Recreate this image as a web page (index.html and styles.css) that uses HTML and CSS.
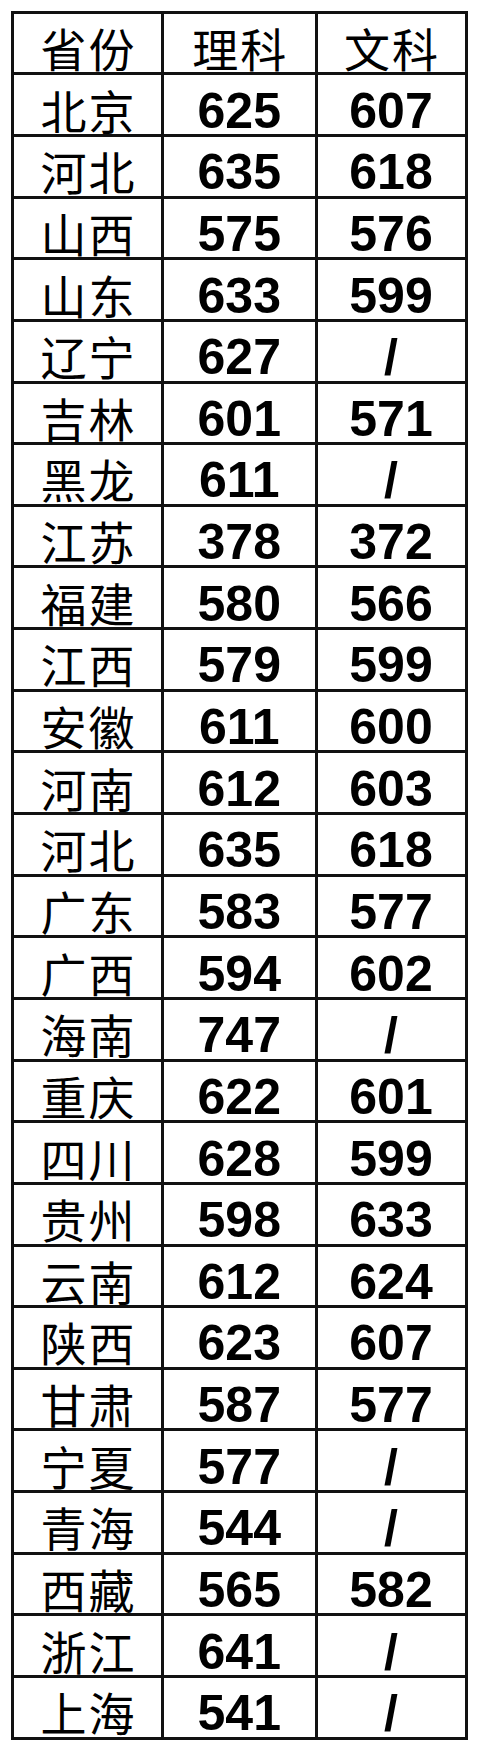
FILE: index.html
```html
<!DOCTYPE html>
<html lang="zh-CN">
<head>
<meta charset="utf-8">
<title>分数线</title>
<link rel="stylesheet" href="styles.css">
</head>
<body>
<div class="grid">
  <div class="cell zh">省份</div><div class="cell zh">理科</div><div class="cell zh">文科</div>
  <div class="cell zh">北京</div><div class="cell num">625</div><div class="cell num">607</div>
  <div class="cell zh">河北</div><div class="cell num">635</div><div class="cell num">618</div>
  <div class="cell zh">山西</div><div class="cell num">575</div><div class="cell num">576</div>
  <div class="cell zh">山东</div><div class="cell num">633</div><div class="cell num">599</div>
  <div class="cell zh">辽宁</div><div class="cell num">627</div><div class="cell num">/</div>
  <div class="cell zh">吉林</div><div class="cell num">601</div><div class="cell num">571</div>
  <div class="cell zh">黑龙</div><div class="cell num">611</div><div class="cell num">/</div>
  <div class="cell zh">江苏</div><div class="cell num">378</div><div class="cell num">372</div>
  <div class="cell zh">福建</div><div class="cell num">580</div><div class="cell num">566</div>
  <div class="cell zh">江西</div><div class="cell num">579</div><div class="cell num">599</div>
  <div class="cell zh">安徽</div><div class="cell num">611</div><div class="cell num">600</div>
  <div class="cell zh">河南</div><div class="cell num">612</div><div class="cell num">603</div>
  <div class="cell zh">河北</div><div class="cell num">635</div><div class="cell num">618</div>
  <div class="cell zh">广东</div><div class="cell num">583</div><div class="cell num">577</div>
  <div class="cell zh">广西</div><div class="cell num">594</div><div class="cell num">602</div>
  <div class="cell zh">海南</div><div class="cell num">747</div><div class="cell num">/</div>
  <div class="cell zh">重庆</div><div class="cell num">622</div><div class="cell num">601</div>
  <div class="cell zh">四川</div><div class="cell num">628</div><div class="cell num">599</div>
  <div class="cell zh">贵州</div><div class="cell num">598</div><div class="cell num">633</div>
  <div class="cell zh">云南</div><div class="cell num">612</div><div class="cell num">624</div>
  <div class="cell zh">陕西</div><div class="cell num">623</div><div class="cell num">607</div>
  <div class="cell zh">甘肃</div><div class="cell num">587</div><div class="cell num">577</div>
  <div class="cell zh">宁夏</div><div class="cell num">577</div><div class="cell num">/</div>
  <div class="cell zh">青海</div><div class="cell num">544</div><div class="cell num">/</div>
  <div class="cell zh">西藏</div><div class="cell num">565</div><div class="cell num">582</div>
  <div class="cell zh">浙江</div><div class="cell num">641</div><div class="cell num">/</div>
  <div class="cell zh">上海</div><div class="cell num">541</div><div class="cell num">/</div>
</div>
</body>
</html>
```
FILE: styles.css
```css
html, body {
  margin: 0;
  padding: 0;
  background: #fff;
}
.grid {
  display: grid;
  grid-template-columns: 147px 150.5px 147px;
  grid-auto-rows: 58.65px;
  gap: 3px;
  padding: 3px;
  background: #111;
  width: max-content;
  margin: 10.7px 0 0 11px;
}
.cell {
  background: #fff;
  color: #000;
  display: flex;
  align-items: center;
  justify-content: center;
  box-sizing: border-box;
}
.zh {
  font-family: "Noto Sans CJK SC", sans-serif;
  font-size: 46px;
  letter-spacing: 2px;
  padding-left: 2px;
  padding-top: 8px;
  line-height: 48px;
}
.num {
  font-family: "Liberation Sans", Arial, sans-serif;
  font-weight: bold;
  font-size: 50px;
  line-height: 42px;
  padding-top: 12px;
}
```
